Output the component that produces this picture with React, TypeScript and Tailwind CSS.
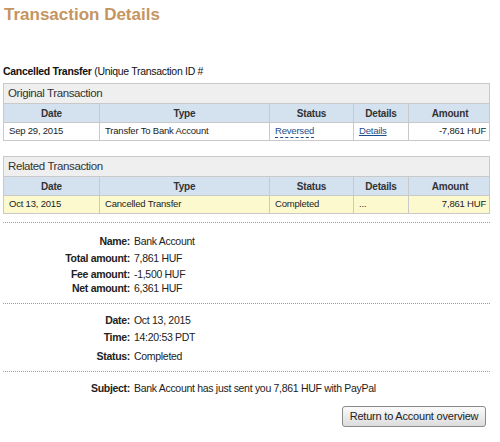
import React from "react";

const font = { fontFamily: '"Liberation Sans", Arial, sans-serif' };

type Row = { date: string; type: string; status: React.ReactNode; details: React.ReactNode; amount: string };

function TxTable({ title, row, yellow, top }: { title: string; row: Row; yellow?: boolean; top: string }) {
  const cols = "grid grid-cols-[95px_170px_84px_55px_83px]";
  const cell = "border-l border-[#c9c9c9] first:border-l-0 px-[5px] flex items-center";
  return (
    <div className={`${top} ml-[3px] w-[487px] border border-[#c9c9c9]`}>
      <div className="h-[20px] bg-[#efefef] border-b border-[#c9c9c9] flex items-center px-[4px] text-[11.5px] tracking-[-0.4px] text-[#333]">{title}</div>
      <div className={`${cols} h-[19px] bg-[#d4e2f0] border-b border-[#c9c9c9] text-[10px] tracking-[-0.2px] font-bold text-[#333]`}>
        {["Date", "Type", "Status", "Details", "Amount"].map((h) => (
          <div key={h} className={`${cell} justify-center`}>{h}</div>
        ))}
      </div>
      <div className={`${cols} h-[17px] ${yellow ? "bg-[#fdf9cf]" : "bg-white"} text-[9.5px] tracking-[-0.2px] text-[#222]`}>
        <div className={cell}>{row.date}</div>
        <div className={cell}>{row.type}</div>
        <div className={cell}>{row.status}</div>
        <div className={cell}>{row.details}</div>
        <div className={`${cell} justify-end`}>{row.amount}</div>
      </div>
    </div>
  );
}

function Dots({ className }: { className: string }) {
  return <div className={`${className} ml-[3px] w-[487px] border-t border-dotted border-[#9a9a9a]`} />;
}

function KV({ k, v, className }: { k: string; v: string; className?: string }) {
  return (
    <div className={`flex text-[10.5px] tracking-[-0.3px] text-[#222] ${className ?? ""}`}>
      <div className="w-[130px] text-right font-bold">{k}</div>
      <div className="pl-[4px]">{v}</div>
    </div>
  );
}

export default function App() {
  return (
    <div className="w-[500px] h-[442px] bg-white overflow-hidden" style={font}>
      <div className="pt-[3px] pl-[4px] text-[17px] font-bold text-[#c5955f] leading-[24px]">
        Transaction Details
      </div>
      <div className="mt-[37px] pl-[3px] text-[10.5px] tracking-[-0.3px] text-[#111] leading-[14px]">
        <span className="font-bold">Cancelled Transfer</span> (Unique Transaction ID #
      </div>
      <TxTable
        top="mt-[5px]"
        title="Original Transaction"
        row={{
          date: "Sep 29, 2015",
          type: "Transfer To Bank Account",
          status: <span className="text-[#1e4d8c] border-b border-dashed border-[#1e4d8c] leading-[12px]">Reversed</span>,
          details: <span className="text-[#1e4d8c] underline">Details</span>,
          amount: "-7,861 HUF",
        }}
      />
      <TxTable
        top="mt-[15px]"
        title="Related Transaction"
        yellow
        row={{ date: "Oct 13, 2015", type: "Cancelled Transfer", status: "Completed", details: "...", amount: "7,861 HUF" }}
      />
      <Dots className="mt-[8px]" />
      <KV k="Name:" v="Bank Account" className="mt-[11px] leading-[14px]" />
      <KV k="Total amount:" v="7,861 HUF" className="mt-[3px] leading-[14px]" />
      <KV k="Fee amount:" v="-1,500 HUF" className="mt-[2px] leading-[14px]" />
      <KV k="Net amount:" v="6,361 HUF" className="mt-[0px] leading-[14px]" />
      <Dots className="mt-[8px]" />
      <KV k="Date:" v="Oct 13, 2015" className="mt-[9px] leading-[14px]" />
      <KV k="Time:" v="14:20:53 PDT" className="mt-[3px] leading-[14px]" />
      <KV k="Status:" v="Completed" className="mt-[5px] leading-[14px]" />
      <Dots className="mt-[8px]" />
      <KV k="Subject:" v="Bank Account has just sent you 7,861 HUF with PayPal" className="mt-[9px] leading-[14px]" />
      <div className="flex justify-end w-[486px] mt-[11px]">
        <button className="h-[21px] w-[144px] whitespace-nowrap border border-[#8a8a8a] rounded-[3px] bg-gradient-to-b from-[#fbfbfb] to-[#dcdcdc] text-[11px] tracking-[-0.2px] text-[#222]">
          Return to Account overview
        </button>
      </div>
    </div>
  );
}
